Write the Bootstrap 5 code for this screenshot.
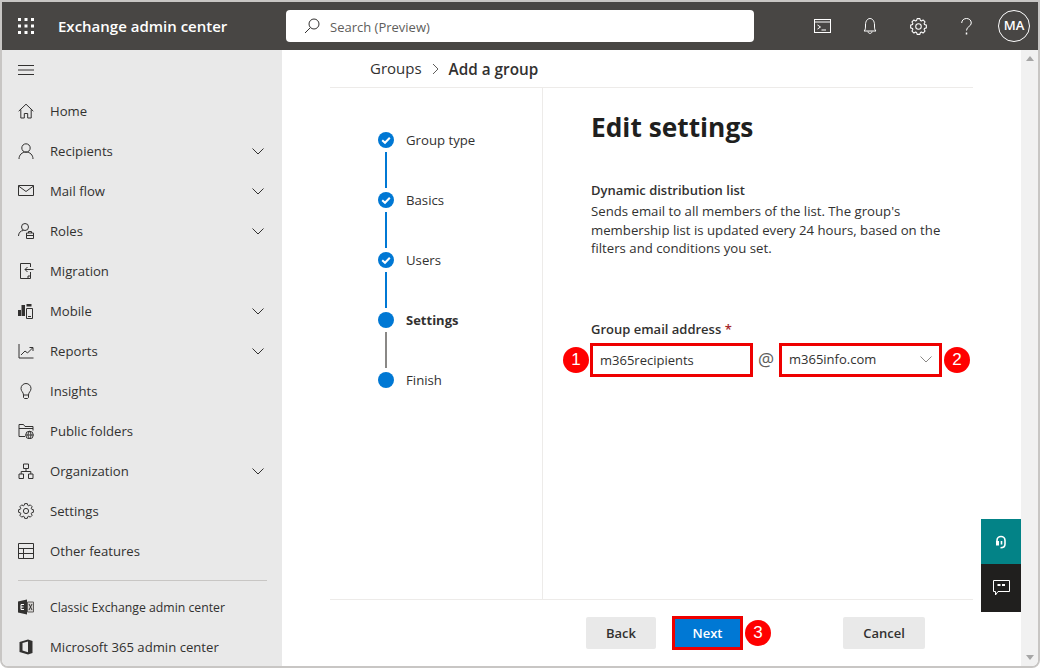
<!DOCTYPE html>
<html lang="en">
<head>
  <meta charset="UTF-8" />
  <meta name="viewport" content="width=device-width, initial-scale=1" />
  <title>Exchange admin center</title>
  <link href="https://cdn.jsdelivr.net/npm/bootstrap@5.3.3/dist/css/bootstrap.min.css" rel="stylesheet" />
  <style>
    html, body { height: 669px; overflow: hidden; background: #fff; }
    body { font-family: "Open Sans", "Noto Sans", sans-serif; font-size: 13px; color: #323130; }
    svg { display: block; flex: none; fill: none; stroke: currentColor; stroke-width: 1; }
    .frame { height: 668px; border: 2px solid #c8c6c4; border-radius: 0 0 8px 8px; overflow: hidden; }
    .topbar { height: 48px; background: #484644; color: #fff; }
    .waffle { width: 56px; padding-left: 16px; }
    .app-name { width: 228px; font-size: 15px; font-weight: 600; }
    .search-box { width: 468px; height: 32px; background: #fff; border-radius: 4px; color: #605e5c; padding-left: 18px; gap: 10px; }
    .search-box span { margin-top: 3px; }
    .top-cell { width: 48px; height: 48px; }
    .avatar { width: 32px; height: 32px; border: 1px solid #fff; border-radius: 50%; font-size: 13px; font-weight: 600; }
    .under-bar { min-height: 0; }
    .sidenav { width: 280px; background: #e9e9e9; }
    .nav-row { height: 40px; padding: 0 16px; gap: 16px; font-size: 13.15px; }
    .nav-row span { margin-top: 2px; }
    .nav-row .chev { margin-left: auto; margin-right: 2px; }
    .nav-row.sm-text { font-size: 12.25px; }
    .nav-sep { height: 1px; background: #c8c6c4; margin: 9px 15px 6px 16px; }
    .content { width: 739px; padding: 0 48px; }
    .crumbs { height: 38px; padding-left: 40px; gap: 10px; border-bottom: 1px solid #edebe9; font-size: 15px; }
    .crumbs b { font-weight: 600; font-size: 15.3px; margin-top: 2px; }
    .wizard-body { height: 511px; }
    .stepper { width: 213px; padding: 44px 0 0 48px; border-right: 1px solid #edebe9; }
    .step { height: 60px; gap: 12px; }
    .step-dot { width: 16px; height: 16px; border-radius: 50%; background: #0078d4; color: #fff; }
    .step-line { width: 2px; height: 36px; margin: 4px 7px; background: #0078d4; }
    .step-line.todo { background: #8a8886; }
    .step-label { line-height: 16px; font-size: 13.2px; }
    .step-label.now { font-weight: 700; font-size: 13px; }
    .settings-pane { padding: 21px 0 0 48px; }
    .pane-title { font-size: 26.3px; font-weight: 700; line-height: 36px; margin: 0 0 36px; color: #201f1e; }
    .pane-sub { font-weight: 600; line-height: 19px; margin-bottom: 2px; }
    .pane-text { width: 352px; font-size: 13.2px; line-height: 18.5px; margin-bottom: 62px; }
    .field-label { font-weight: 600; line-height: 19px; margin-bottom: 4px; }
    .field-req { color: #a4262c; }
    .marked { border: 3px solid #e00; }
    .mail-row { margin-left: -1px; }
    .mail-input { width: 163px; height: 34px; padding: 0 7px; border-radius: 0; font-size: 13px; color: #323130; }
    .mail-at { width: 26px; text-align: center; font-size: 18px; color: #605e5c; }
    .domain-box { width: 163px; height: 34px; padding: 0 7px; }
    .domain-box svg { color: #8a8886; }
    .callout { position: absolute; top: 50%; width: 26px; height: 26px; margin-top: -13px; border-radius: 50%; background: #f00; color: #fff; font-family: "Liberation Sans", sans-serif; font-size: 17px; }
    .callout.on-left { right: calc(100% + 1px); }
    .callout.on-right { left: calc(100% + 5px); }
    .wizard-foot { height: 67px; border-top: 1px solid #edebe9; padding: 17px 0 0 256px; }
    .foot-btn { height: 32px; border: 0; border-radius: 2px; background: #e9e9e9; color: #323130; font-size: 13px; font-weight: 600; padding: 1px 0 0; }
    .next-box { margin: -1px 0 0 16px; height: 34px; width: 71px; }
    .next-btn { width: 100%; height: 100%; border: 0; border-radius: 0; padding: 1px 0 0; background: #0078d4; color: #fff; font-size: 13px; font-weight: 600; }
    .side-tabs { position: absolute; right: 17px; top: 469px; width: 40px; color: #fff; }
    .side-tab { height: 45px; background: #038387; }
    .side-tab.dark { height: 48px; background: #201f1e; }
    .scroll-rail { width: 17px; background: #f1f1f1; padding: 6px 0; }
    .tri-up { border: 4px solid transparent; border-top: 0; border-bottom: 5px solid #a6a6a6; }
    .tri-down { border: 4px solid transparent; border-bottom: 0; border-top: 5px solid #a6a6a6; }
  </style>
</head>
<body>
  <svg width="0" height="0" class="position-absolute">
    <symbol id="gear" viewBox="0 0 16 16"><polygon points="6.18,2.39 6.7,0.61 9.3,0.61 9.82,2.39 10.68,2.75 12.31,1.86 14.14,3.69 13.25,5.32 13.61,6.18 15.39,6.7 15.39,9.3 13.61,9.82 13.25,10.68 14.14,12.31 12.31,14.14 10.68,13.25 9.82,13.61 9.3,15.39 6.7,15.39 6.18,13.61 5.32,13.25 3.69,14.14 1.86,12.31 2.75,10.68 2.39,9.82 0.61,9.3 0.61,6.7 2.39,6.18 2.75,5.32 1.86,3.69 3.69,1.86 5.32,2.75" stroke-linejoin="round"/><circle cx="8" cy="8" r="2.6"/></symbol>
    <symbol id="chev" viewBox="0 0 12 7"><path d="M.5.5 6 6l5.5-5.5"/></symbol>
    <symbol id="tick" viewBox="0 0 16 16"><path d="M4.2 8.2 7 10.8l4.8-5" stroke-width="2"/></symbol>
  </svg>

  <div class="frame d-flex flex-column">
    <header class="topbar d-flex align-items-center flex-shrink-0">
      <div class="waffle">
        <svg width="16" height="16" viewBox="0 0 16 16" style="fill:#fff;stroke:none"><rect x="0" y="0" width="3" height="3"/><rect x="6.5" y="0" width="3" height="3"/><rect x="13" y="0" width="3" height="3"/><rect x="0" y="6.5" width="3" height="3"/><rect x="6.5" y="6.5" width="3" height="3"/><rect x="13" y="6.5" width="3" height="3"/><rect x="0" y="13" width="3" height="3"/><rect x="6.5" y="13" width="3" height="3"/><rect x="13" y="13" width="3" height="3"/></svg>
      </div>
      <div class="app-name">Exchange admin center</div>
      <div class="search-box d-flex align-items-center">
        <svg width="16" height="16" viewBox="0 0 16 16" color="#323130"><circle cx="10" cy="6" r="5"/><path d="M6.3 9.7 1 15"/></svg>
        <span>Search (Preview)</span>
      </div>
      <div class="d-flex align-items-center ms-auto">
        <div class="top-cell d-flex align-items-center justify-content-center">
          <svg width="17" height="14" viewBox="0 0 17 14"><rect x=".5" y=".5" width="16" height="13"/><path d="M.5 3h16M3.5 6 6.500 8l-3 2M7.500 11H12"/></svg>
        </div>
        <div class="top-cell d-flex align-items-center justify-content-center">
          <svg width="14" height="16" viewBox="0 0 14 16"><path d="M1 13c1.500-1 1.500-3 1.500-6 0-4 2-6.500 4.500-6.500s4.500 2.500 4.500 6.500c0 3 0 5 1.500 6zM5 13.500c0 2.500 4 2.500 4 0"/></svg>
        </div>
        <div class="top-cell d-flex align-items-center justify-content-center">
          <svg width="17" height="17"><use href="#gear"/></svg>
        </div>
        <div class="top-cell d-flex align-items-center justify-content-center">
          <svg width="11" height="17" viewBox="0 0 11 17"><path d="M.7 5c0-6 9.600-6 9.600 0 0 3.500-4.800 3.500-4.800 7.500"/><path d="M5.500 14.500v2" stroke-width="1.500"/></svg>
        </div>
        <div class="top-cell d-flex align-items-center justify-content-center">
          <div class="avatar d-flex align-items-center justify-content-center">MA</div>
        </div>
      </div>
    </header>

    <div class="under-bar d-flex flex-grow-1 position-relative">
      <nav class="sidenav">
        <div class="nav-row d-flex align-items-center">
          <svg width="16" height="10" viewBox="0 0 16 10"><path d="M0 .5h16M0 5h16M0 9.500h16"/></svg>
        </div>
        <div style="height:1px"></div>
        <div class="nav-row d-flex align-items-center">
          <svg width="16" height="16" viewBox="0 0 16 16"><path d="M.7 8.200 8 1.200l7.300 7M2.800 6.500V15h3.500v-4.500h3.400V15h3.500V6.500"/></svg><span>Home</span>
        </div>
        <div class="nav-row d-flex align-items-center">
          <svg width="16" height="16" viewBox="0 0 16 16"><circle cx="8" cy="5" r="4.200"/><path d="M1 16c0-4 3-7 7-7s7 3 7 7"/></svg><span>Recipients</span>
          <svg class="chev" width="12" height="7"><use href="#chev"/></svg>
        </div>
        <div class="nav-row d-flex align-items-center">
          <svg width="16" height="16" viewBox="0 0 16 16"><path d="M.5 2.500h15v10H.5zM.5 3 8 8.500 15.500 3"/></svg><span>Mail flow</span>
          <svg class="chev" width="12" height="7"><use href="#chev"/></svg>
        </div>
        <div class="nav-row d-flex align-items-center">
          <svg width="16" height="16" viewBox="0 0 16 16"><circle cx="7" cy="4" r="3.500"/><path d="M.5 13c0-3 2-5.500 5-5.500M8.500 10h7v5.500h-7zM10.500 10V8.500h3V10M8.500 12.500h7"/></svg><span>Roles</span>
          <svg class="chev" width="12" height="7"><use href="#chev"/></svg>
        </div>
        <div class="nav-row d-flex align-items-center">
          <svg width="16" height="16" viewBox="0 0 16 16"><path d="M12.500 4V.5h-10v15h10V9M15.500 6.500H7M9.500 4 7 6.500 9.500 9M10 15.500V13h2.500"/></svg><span>Migration</span>
        </div>
        <div class="nav-row d-flex align-items-center">
          <svg width="16" height="16" viewBox="0 0 16 16"><path d="M0 7h3v6H0zM3.500 2H7v11H3.500zM8.500 1h5v2.500h-5z" fill="currentColor" stroke="none"/><path d="M8.500 5.500h6v10h-6zM10 13.500h3"/></svg><span>Mobile</span>
          <svg class="chev" width="12" height="7"><use href="#chev"/></svg>
        </div>
        <div class="nav-row d-flex align-items-center">
          <svg width="16" height="16" viewBox="0 0 16 16"><path d="M1 1v14h14.500M3 12l4-4 2.500 2 5-5M11.500 4.500h3.500V8"/></svg><span>Reports</span>
          <svg class="chev" width="12" height="7"><use href="#chev"/></svg>
        </div>
        <div class="nav-row d-flex align-items-center">
          <svg width="16" height="16" viewBox="0 0 16 16"><path d="M5.500 12c0-3-2.500-3.500-2.500-6.500a5 5 0 0 1 10 0C13 8.500 10.500 9 10.500 12zM5.500 12v2.500l1 1h3l1-1V12"/></svg><span>Insights</span>
        </div>
        <div class="nav-row d-flex align-items-center">
          <svg width="16" height="16" viewBox="0 0 16 16"><path d="M7 13.500H1V1.500h4.500L7 3.500h8v4M1 5.500h14"/><circle cx="11.500" cy="12" r="3.800"/><path d="M7.700 12h7.600M11.500 8.200c-2 2.500-2 5 0 7.600 2-2.600 2-5.100 0-7.600z"/></svg><span>Public folders</span>
        </div>
        <div class="nav-row d-flex align-items-center">
          <svg width="16" height="16" viewBox="0 0 16 16"><path d="M5.500 1h5v4.500h-5zM1 11h4.500v4.500H1zM10.500 11H15v4.500h-4.500zM8 5.500v3M3.200 11V8.500h9.600V11"/></svg><span>Organization</span>
          <svg class="chev" width="12" height="7"><use href="#chev"/></svg>
        </div>
        <div class="nav-row d-flex align-items-center">
          <svg width="16" height="16"><use href="#gear"/></svg><span>Settings</span>
        </div>
        <div class="nav-row d-flex align-items-center">
          <svg width="16" height="16" viewBox="0 0 16 16"><path d="M.5.500h15v15H.5zM.5 5.500h15M.5 10.500h15M5.500 5.500v10"/></svg><span>Other features</span>
        </div>
        <div class="nav-sep"></div>
        <div class="nav-row sm-text d-flex align-items-center">
          <svg width="16" height="16" viewBox="0 0 16 16"><path d="M0 2.500 9 .5v15l-9-2z" fill="#323130" stroke="none"/><path d="M9.500 3h6v10h-6z" fill="#d2d0ce" stroke="#605e5c"/><path d="M11 5l3 6M14 5l-3 6" stroke="#323130"/><path d="M3 5.500h3M3 8h2.500M3 10.500h3M3 5.500v5" stroke="#fff"/></svg><span>Classic Exchange admin center</span>
        </div>
        <div class="nav-row d-flex align-items-center">
          <svg width="16" height="16" viewBox="0 0 16 16"><path d="M1.500 3 10 .5 14.500 2v12L10 15.500 1.500 13zM10 2.500 4.500 4v7.500l5.500 1.700z" fill="#323130" stroke="none" fill-rule="evenodd"/></svg><span>Microsoft 365 admin center</span>
        </div>
      </nav>

      <main class="content">
        <div class="crumbs d-flex align-items-center">
          <span>Groups</span>
          <svg width="7" height="12" viewBox="0 0 7 12" color="#605e5c"><path d="M1 1l5 5-5 5"/></svg>
          <b>Add a group</b>
        </div>
        <div class="wizard-body d-flex">
          <div class="stepper">
            <div class="step d-flex">
              <div><div class="step-dot"><svg width="16" height="16"><use href="#tick"/></svg></div><div class="step-line"></div></div>
              <div class="step-label">Group type</div>
            </div>
            <div class="step d-flex">
              <div><div class="step-dot"><svg width="16" height="16"><use href="#tick"/></svg></div><div class="step-line"></div></div>
              <div class="step-label">Basics</div>
            </div>
            <div class="step d-flex">
              <div><div class="step-dot"><svg width="16" height="16"><use href="#tick"/></svg></div><div class="step-line"></div></div>
              <div class="step-label">Users</div>
            </div>
            <div class="step d-flex">
              <div><div class="step-dot"></div><div class="step-line todo"></div></div>
              <div class="step-label now">Settings</div>
            </div>
            <div class="step d-flex">
              <div><div class="step-dot"></div></div>
              <div class="step-label">Finish</div>
            </div>
          </div>
          <div class="settings-pane flex-grow-1">
            <h1 class="pane-title">Edit settings</h1>
            <div class="pane-sub">Dynamic distribution list</div>
            <div class="pane-text">Sends email to all members of the list. The group's membership list is updated every 24 hours, based on the filters and conditions you set.</div>
            <div class="field-label">Group email address <span class="field-req">*</span></div>
            <div class="mail-row d-flex align-items-center">
              <div class="position-relative">
                <input class="form-control mail-input marked" type="text" value="m365recipients" />
                <span class="callout on-left d-flex align-items-center justify-content-center">1</span>
              </div>
              <span class="mail-at">@</span>
              <div class="domain-box marked position-relative d-flex align-items-center justify-content-between">
                <span>m365info.com</span>
                <svg width="12" height="7"><use href="#chev"/></svg>
                <span class="callout on-right d-flex align-items-center justify-content-center">2</span>
              </div>
            </div>
          </div>
        </div>
        <div class="wizard-foot d-flex align-items-start">
          <button class="btn foot-btn" style="width:70px" type="button">Back</button>
          <div class="next-box marked position-relative">
            <button class="btn next-btn" type="button">Next</button>
            <span class="callout on-right d-flex align-items-center justify-content-center">3</span>
          </div>
          <button class="btn foot-btn" style="width:82px;margin-left:100px" type="button">Cancel</button>
        </div>
      </main>

      <div class="scroll-rail d-flex flex-column justify-content-between align-items-center">
        <span class="tri-up"></span>
        <span class="tri-down"></span>
      </div>

      <div class="side-tabs">
        <div class="side-tab d-flex align-items-center justify-content-center">
          <svg width="14" height="16" viewBox="0 0 14 16" style="stroke-width:1.600"><path d="M3 11V6.500a4 4 0 0 1 8 0V10c0 2.500-2 3.800-4.500 3.800"/><path d="M2 7h3v4.500H2z" fill="currentColor" stroke="none"/><path d="M7.500 7v3.500"/></svg>
        </div>
        <div class="side-tab dark d-flex align-items-center justify-content-center">
          <svg width="17" height="16" viewBox="0 0 17 16"><path d="M.5.500h16v11H5L2.500 15v-3.500h-2z"/><path d="M4.500 4h3v2h-3zM9 4h3v2H9z" fill="currentColor" stroke="none"/></svg>
        </div>
      </div>
    </div>
  </div>
  <script src="https://cdn.jsdelivr.net/npm/bootstrap@5.3.3/dist/js/bootstrap.bundle.min.js"></script>
</body>
</html>
